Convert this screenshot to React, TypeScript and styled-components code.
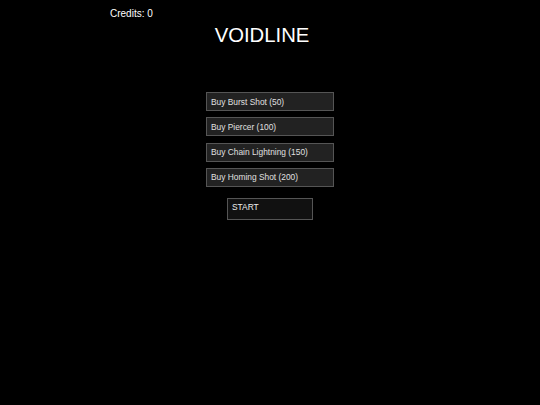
import React from "react";
import styled, { createGlobalStyle } from "styled-components";

const Global = createGlobalStyle`
  html, body { margin: 0; padding: 0; background: #000; }
  body { font-family: "Liberation Sans", Arial, sans-serif; color: #fff; }
`;

const Screen = styled.div`
  width: 540px;
  height: 405px;
  background: #000;
  display: flex;
  flex-direction: column;
  align-items: center;
  overflow: hidden;
`;

const Hud = styled.div`
  align-self: flex-start;
  margin-left: 110px;
  margin-top: 7px;
  font-size: 10px;
  line-height: 13px;
  color: #fff;
`;

const Title = styled.h1`
  margin: 4px 16px 0 0;
  font-size: 20.3px;
  line-height: 23px;
  font-weight: normal;
  color: #fff;
`;

const Shop = styled.div`
  margin-top: 45px;
  display: flex;
  flex-direction: column;
  align-items: center;
  gap: 6.3px;
`;

const ShopButton = styled.button`
  box-sizing: border-box;
  width: 128px;
  height: 19px;
  padding: 0 0 0 4px;
  background: #222;
  border: 1px solid #555;
  color: #e0e0e0;
  font-family: "Liberation Sans", Arial, sans-serif;
  font-size: 8.4px;
  text-align: left;
  display: flex;
  align-items: center;
`;

const StartButton = styled.button`
  box-sizing: border-box;
  width: 86px;
  height: 22px;
  margin-top: 5px;
  padding: 3px 0 0 4px;
  background: #111;
  border: 1px solid #555;
  color: #eee;
  font-family: "Liberation Sans", Arial, sans-serif;
  font-size: 8.4px;
  text-align: left;
  display: flex;
  align-items: flex-start;
`;

const items = [
  "Buy Burst Shot (50)",
  "Buy Piercer (100)",
  "Buy Chain Lightning (150)",
  "Buy Homing Shot (200)",
];

export default function App() {
  return (
    <>
      <Global />
      <Screen>
        <Hud>Credits: 0</Hud>
        <Title>VOIDLINE</Title>
        <Shop>
          {items.map((t) => (
            <ShopButton key={t}>{t}</ShopButton>
          ))}
          <StartButton>START</StartButton>
        </Shop>
      </Screen>
    </>
  );
}
